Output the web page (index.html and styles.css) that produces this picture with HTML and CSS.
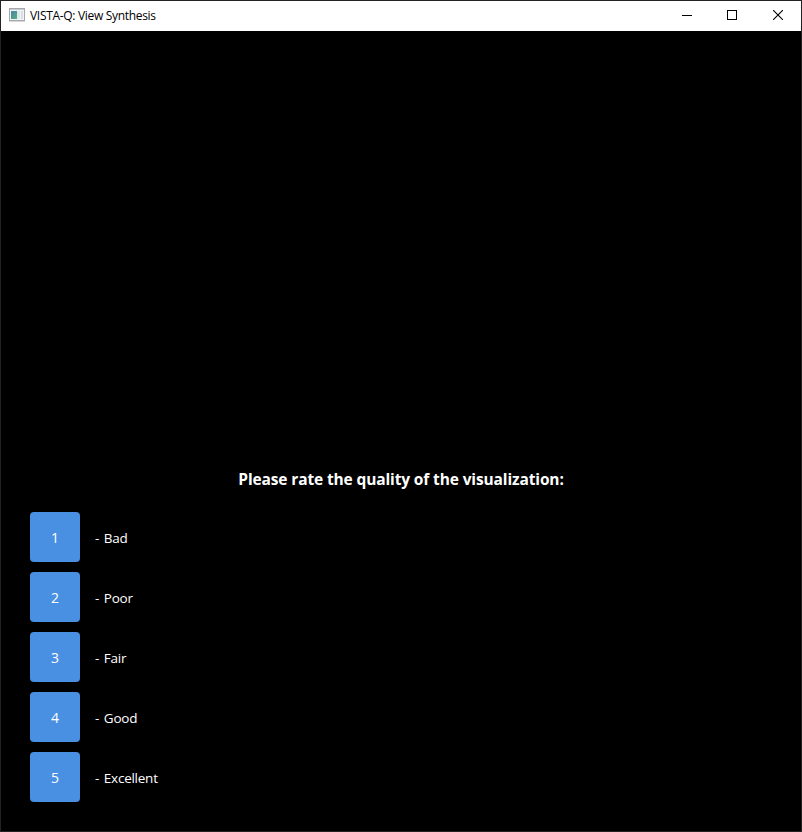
FILE: index.html
```html
<!DOCTYPE html>
<html lang="en">
<head>
<meta charset="utf-8">
<title>VISTA-Q: View Synthesis</title>
<link rel="stylesheet" href="styles.css">
</head>
<body>
<div class="window">
  <header class="titlebar">
    <svg class="app-icon" width="16" height="14" viewBox="0 0 16 14">
      <defs><linearGradient id="pane" x1="0" y1="0" x2="1" y2="1"><stop offset="0" stop-color="#4c83ad"/><stop offset="1" stop-color="#58ad7b"/></linearGradient></defs>
      <rect x=".5" y=".5" width="15" height="12" fill="#f2f3f4" stroke="#a5a9ad"/>
      <path d="M1 1.500h14" stroke="#c9cdd1"/>
      <path d="M0 13.500h16" stroke="#d5d7d9"/>
      <rect x="2" y="3" width="6" height="8" fill="url(#pane)"/>
      <rect x="8" y="3" width="3" height="8" fill="#dfe8ed"/>
      <rect x="12" y="3" width="2" height="8" fill="#d6e2e2"/>
    </svg>
    <span class="title">VISTA-Q: View Synthesis</span>
    <div class="controls">
      <span class="control"><svg width="12" height="10" viewBox="0 0 12 10"><path d="M2 5.500h10" stroke="#000"/></svg></span>
      <span class="control"><svg width="10" height="10" viewBox="0 0 10 10"><rect x=".5" y=".5" width="9" height="9" fill="none" stroke="#000"/></svg></span>
      <span class="control"><svg width="10" height="10" viewBox="0 0 10 10"><path d="M0 0l10 10M10 0L0 10" stroke="#000" stroke-width="1.100"/></svg></span>
    </div>
  </header>
  <main class="content">
    <h1 class="question">Please rate the quality of the visualization:</h1>
    <div class="ratings">
      <div class="rating"><button class="score">1</button><span class="label">- Bad</span></div>
      <div class="rating"><button class="score">2</button><span class="label">- Poor</span></div>
      <div class="rating"><button class="score">3</button><span class="label">- Fair</span></div>
      <div class="rating"><button class="score">4</button><span class="label">- Good</span></div>
      <div class="rating"><button class="score">5</button><span class="label">- Excellent</span></div>
    </div>
  </main>
</div>
</body>
</html>
```
FILE: styles.css
```css
* { box-sizing: border-box; }
body {
  margin: 0;
  background: #000;
  font-family: "Open Sans", "Noto Sans", sans-serif;
}
.window {
  display: flex;
  flex-direction: column;
  width: 802px;
  height: 832px;
  border: 1px solid #232325;
  background: #000;
}
.titlebar {
  display: flex;
  align-items: center;
  height: 30px;
  padding-left: 8px;
  background: #fff;
  color: #000;
}
.app-icon { display: block; margin-bottom: 2px; }
.title {
  margin-left: 5px;
  font-size: 12px;
  line-height: 30px;
  letter-spacing: -0.31px;
  white-space: nowrap;
}
.controls { display: flex; height: 30px; margin-left: auto; }
.control {
  display: flex;
  width: 46px;
  align-items: center;
  justify-content: center;
  padding-bottom: 2px;
}
.control svg { display: block; }
.content {
  display: flex;
  flex: 1;
  flex-direction: column;
  justify-content: flex-end;
  padding: 0 29px 29px;
  color: #fff;
}
.question {
  margin: 0 0 21px;
  font-size: 15.5px;
  font-weight: 700;
  line-height: 24px;
  letter-spacing: -0.13px;
  text-align: center;
  white-space: nowrap;
}
.ratings { display: flex; flex-direction: column; gap: 10px; }
.rating { display: flex; align-items: center; gap: 15px; }
.score {
  width: 50px;
  height: 50px;
  padding: 1px 0 0;
  border: 0;
  border-radius: 4px;
  background: #4a90e2;
  color: #fff;
  font: 14px/19px "Open Sans", "Noto Sans", sans-serif;
}
.label {
  padding-top: 2px;
  font-size: 13.5px;
  line-height: 20px;
  letter-spacing: -0.25px;
  word-spacing: 1.5px;
}
```
